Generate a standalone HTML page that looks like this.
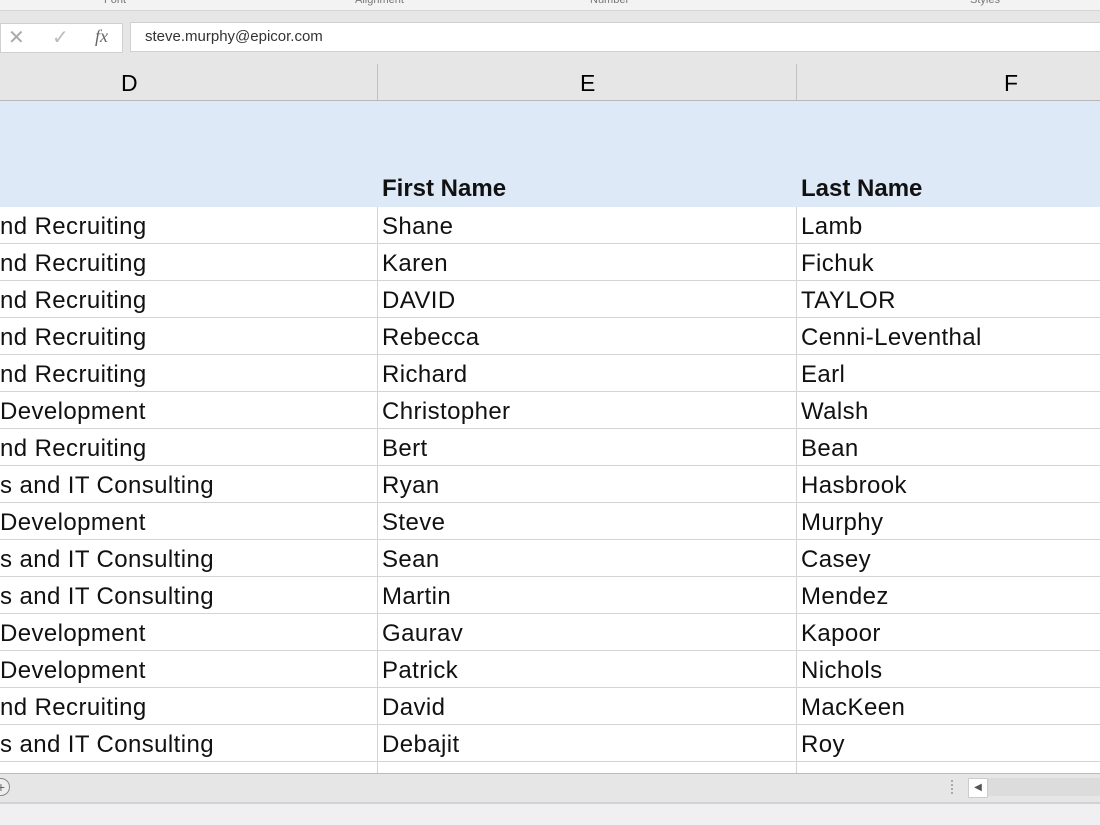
<!DOCTYPE html>
<html><head><style>
body{margin:0;width:1100px;height:825px;overflow:hidden;background:#f0eff1;font-family:"Liberation Sans",sans-serif;position:relative}
.a{position:absolute}
.t{position:absolute;font-size:24px;letter-spacing:0.4px;color:#111;white-space:nowrap;line-height:37px}
</style></head><body>
<div class="a" style="left:0;top:0;width:1100px;height:10px;background:#f3f3f3;border-bottom:1px solid #d6d6d6"></div>
<div class="a" style="left:104px;top:-6px;font-size:11px;color:#777">Font</div>
<div class="a" style="left:355px;top:-6px;font-size:11px;color:#777">Alignment</div>
<div class="a" style="left:590px;top:-6px;font-size:11px;color:#777">Number</div>
<div class="a" style="left:970px;top:-6px;font-size:11px;color:#777">Styles</div>
<div class="a" style="left:0;top:11px;width:1100px;height:53px;background:#e6e6e6"></div>
<div class="a" style="left:0;top:23px;width:121px;height:28px;background:#fff;border:1px solid #d0d0d0"></div>
<div class="a" style="left:8px;top:25px;font-size:20px;color:#aaa">✕</div>
<div class="a" style="left:52px;top:25px;font-size:20px;color:#bbb">✓</div>
<div class="a" style="left:95px;top:26px;font-size:18px;color:#666;font-style:italic;font-family:'Liberation Serif',serif">fx</div>
<div class="a" style="left:130px;top:22px;width:980px;height:28px;background:#fff;border:1px solid #d0d0d0"></div>
<div class="a" style="left:145px;top:28px;font-size:15px;color:#333">steve.murphy@epicor.com</div>
<div class="a" style="left:0;top:64px;width:1100px;height:36px;background:#e6e6e6;border-bottom:1px solid #b8b8b8"></div>
<div class="a" style="left:377px;top:64px;width:1px;height:36px;background:#c0c0c0"></div>
<div class="a" style="left:796px;top:64px;width:1px;height:36px;background:#c0c0c0"></div>
<div class="a" style="left:121px;top:70px;font-size:23px">D</div>
<div class="a" style="left:580px;top:70px;font-size:23px">E</div>
<div class="a" style="left:1004px;top:70px;font-size:23px">F</div>
<div class="a" style="left:0;top:101px;width:1100px;height:106px;background:#dde9f7"></div>
<div class="t" style="left:382px;top:170px;font-weight:bold;letter-spacing:0px">First Name</div>
<div class="t" style="left:801px;top:170px;font-weight:bold;letter-spacing:0px">Last Name</div>
<div class="a" style="left:0;top:207px;width:1100px;height:566px;background:#fff"></div>
<div id="g"></div>
<div class="a" style="left:0;top:773px;width:1100px;height:28px;background:#e6e6e6;border-top:1px solid #bbb;border-bottom:2px solid #d2d2d2"></div>
<div class="a" style="left:-8px;top:778px;width:16px;height:16px;border:1px solid #888;border-radius:50%;font-size:14px;line-height:16px;text-align:center;color:#666;background:#eee">+</div>
<div class="a" style="left:951px;top:780px;width:2px;height:14px;border-left:2px dotted #aaa"></div>
<div class="a" style="left:968px;top:778px;width:132px;height:18px;background:#dcdcdc"></div>
<div class="a" style="left:968px;top:778px;width:18px;height:18px;background:#fff;border:1px solid #ccc;font-size:10px;text-align:center;line-height:18px;color:#555">◀</div>
<script>
var d=[["nd Recruiting","Shane","Lamb"],["nd Recruiting","Karen","Fichuk"],["nd Recruiting","DAVID","TAYLOR"],["nd Recruiting","Rebecca","Cenni-Leventhal"],["nd Recruiting","Richard","Earl"],["Development","Christopher","Walsh"],["nd Recruiting","Bert","Bean"],["s and IT Consulting","Ryan","Hasbrook"],["Development","Steve","Murphy"],["s and IT Consulting","Sean","Casey"],["s and IT Consulting","Martin","Mendez"],["Development","Gaurav","Kapoor"],["Development","Patrick","Nichols"],["nd Recruiting","David","MacKeen"],["s and IT Consulting","Debajit","Roy"]];
var h="";
for(var i=0;i<d.length;i++){var y=207+i*37;
h+='<div class="t" style="left:0;top:'+(y+1)+'px">'+d[i][0]+'</div><div class="t" style="left:382px;top:'+(y+1)+'px">'+d[i][1]+'</div><div class="t" style="left:801px;top:'+(y+1)+'px">'+d[i][2]+'</div><div class="a" style="left:0;top:'+(y+36)+'px;width:1100px;height:1px;background:#d4d4d4"></div>';}
h+='<div class="a" style="left:377px;top:207px;width:1px;height:566px;background:#d4d4d4"></div><div class="a" style="left:796px;top:207px;width:1px;height:566px;background:#d4d4d4"></div>';
document.getElementById('g').innerHTML=h;
</script>
</body></html>
